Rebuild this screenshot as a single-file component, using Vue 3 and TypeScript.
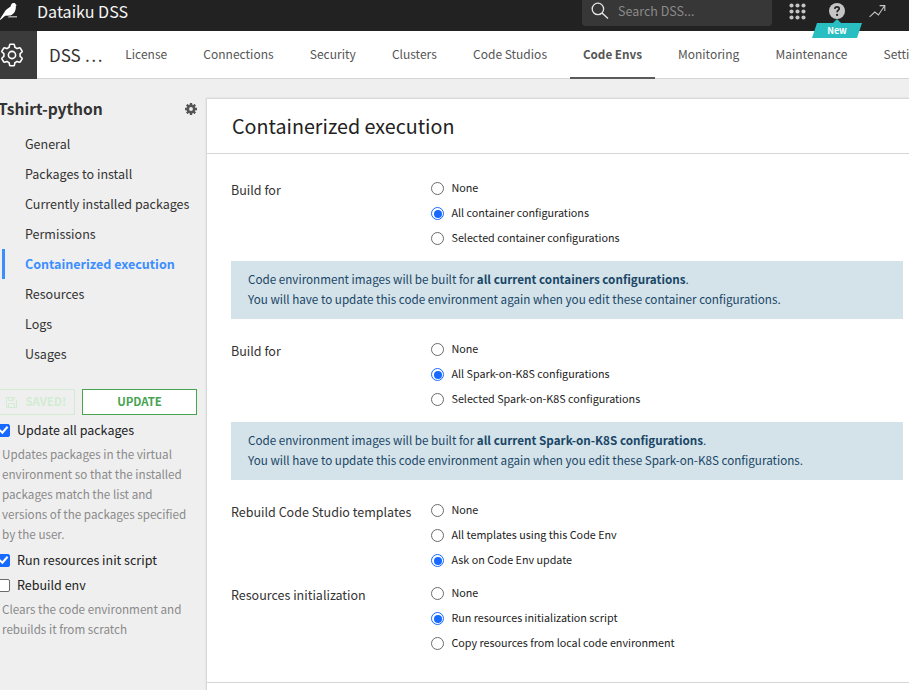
<script setup lang="ts">
import { reactive, ref } from 'vue'

interface Group {
  key: string
  label: string
  options: string[]
  selected: number
  note?: { strong: string; rest: string }
}

const tabs = ['License', 'Connections', 'Security', 'Clusters', 'Code Studios', 'Code Envs', 'Monitoring', 'Maintenance', 'Settings']
const activeTab = ref('Code Envs')

const sections = ['General', 'Packages to install', 'Currently installed packages', 'Permissions', 'Containerized execution', 'Resources', 'Logs', 'Usages']
const activeSection = ref('Containerized execution')

const groups = reactive<Group[]>([
  {
    key: 'containers',
    label: 'Build for',
    options: ['None', 'All container configurations', 'Selected container configurations'],
    selected: 1,
    note: { strong: 'all current containers configurations', rest: 'container' },
  },
  {
    key: 'spark',
    label: 'Build for',
    options: ['None', 'All Spark-on-K8S configurations', 'Selected Spark-on-K8S configurations'],
    selected: 1,
    note: { strong: 'all current Spark-on-K8S configurations', rest: 'Spark-on-K8S' },
  },
  {
    key: 'studio',
    label: 'Rebuild Code Studio templates',
    options: ['None', 'All templates using this Code Env', 'Ask on Code Env update'],
    selected: 2,
  },
  {
    key: 'resources',
    label: 'Resources initialization',
    options: ['None', 'Run resources initialization script', 'Copy resources from local code environment'],
    selected: 1,
  },
])

const flags = reactive({ updateAll: true, runInit: true, rebuild: false })
</script>

<template>
  <div class="page">
    <header class="topbar">
      <svg class="bird" width="18" height="21" viewBox="0 0 18 21">
        <path fill="#fff" d="M0 19 L4.2 12.4 C5.6 9.8 8.4 8.3 10.6 6.6 C10.8 4.6 11.8 3 13.6 3 C14.8 3 15.4 3.5 15.7 4.3 L16.8 5.2 L15.8 5.8 C16.2 9.7 14.8 13.8 10.4 15.4 L5.2 15.7 L.6 19.8 H0 Z" />
        <path fill="#aaa" d="M9 16 H17 V17.6 H7.5 Z" />
      </svg>
      <span class="product">Dataiku DSS</span>
      <div class="search">
        <svg width="18" height="18" viewBox="0 0 18 18" fill="none" stroke="#e8e8e8" stroke-width="1.3">
          <circle cx="6.9" cy="6.9" r="5.7" />
          <path d="M11 11 L17 16.6" />
        </svg>
        <span>Search DSS...</span>
      </div>
      <svg class="apps" width="17" height="17" viewBox="0 0 17 17" fill="#c4c4c4">
        <template v-for="r in 3" :key="r">
          <circle v-for="c in 3" :key="c" :cx="c * 6 - 3.5" :cy="r * 6 - 3.5" r="2.05" />
        </template>
      </svg>
      <div class="help">
        <svg width="16" height="16" viewBox="0 0 16 16">
          <circle cx="8" cy="8" r="8" fill="#c4c4c4" />
          <path d="M5.8 5.9 C5.9 4.4 6.8 3.8 8 3.8 C9.4 3.8 10.2 4.6 10.2 5.7 C10.2 7.2 8.1 7.3 8.1 9.3" fill="none" stroke="#222" stroke-width="1.7" />
          <circle cx="8.1" cy="11.9" r="1.15" fill="#222" />
        </svg>
        <div class="badge"><span>New</span></div>
      </div>
      <svg class="trend" width="18" height="15" viewBox="0 0 18 15" fill="none" stroke="#c4c4c4" stroke-width="1.1">
        <path d="M.6 12.9 L5.8 8 L9.4 11 L15.6 1.8 M10.6 1.6 H15.8 V7" />
      </svg>
    </header>

    <nav class="navbar">
      <div class="admin">
        <svg width="24" height="24" viewBox="0 0 24 24" fill="none" stroke="#fff" stroke-width="1.6" stroke-linejoin="round">
          <path d="M10.2 1.3 H13.8 Q14.3 1.3 14.4 1.9 L14.9 4.3 L17.1 5.6 L19.5 4.8 Q20 4.6 20.3 5.1 L22.1 8.1 Q22.4 8.6 22 9 L20.1 10.7 V13.3 L22 15 Q22.4 15.4 22.1 15.9 L20.3 18.9 Q20 19.4 19.5 19.2 L17.1 18.4 L14.9 19.7 L14.4 22.1 Q14.3 22.7 13.8 22.7 H10.2 Q9.7 22.7 9.6 22.1 L9.1 19.7 L6.9 18.4 L4.5 19.2 Q4 19.4 3.7 18.9 L1.9 15.9 Q1.6 15.4 2 15 L3.9 13.3 V10.7 L2 9 Q1.6 8.6 1.9 8.1 L3.7 5.1 Q4 4.6 4.5 4.8 L6.9 5.6 L9.1 4.3 L9.6 1.9 Q9.7 1.3 10.2 1.3 Z" />
          <circle cx="12" cy="12" r="3.6" />
        </svg>
      </div>
      <div class="crumb">DSS …</div>
      <div class="tabs">
        <a v-for="t in tabs" :key="t" class="tab" :class="{ active: t === activeTab }" @click="activeTab = t">{{ t }}</a>
      </div>
    </nav>

    <div class="body">
      <aside class="side">
        <div class="env">
          <h1>Tshirt-python</h1>
          <svg width="12" height="12" viewBox="0 0 12 12">
            <circle cx="6" cy="6" r="3.2" fill="none" stroke="#555" stroke-width="2.6" />
            <g fill="#555">
              <rect v-for="i in 8" :key="i" x="4.8" y="0" width="2.4" height="2.4" rx=".3" :transform="`rotate(${i * 45} 6 6)`" />
            </g>
          </svg>
        </div>
        <ul class="menu">
          <li v-for="s in sections" :key="s" :class="{ active: s === activeSection }" @click="activeSection = s">{{ s }}</li>
        </ul>
        <div class="buttons">
          <button class="saved" disabled>
            <svg width="11" height="11" viewBox="0 0 11 11" fill="none" stroke="currentColor">
              <path d="M.5 .5 H8.2 L10.5 2.8 V10.5 H.5 Z M2.5 .5 V3.5 H7.5 V.5 M2.5 10.5 V6.5 H8.5 V10.5" />
              <path d="M6 .5 V3" />
            </svg>
            <span>SAVED!</span>
          </button>
          <button class="update">UPDATE</button>
        </div>
        <label class="check"><input v-model="flags.updateAll" type="checkbox"><span>Update all packages</span></label>
        <p>Updates packages in the virtual<br>environment so that the installed<br>packages match the list and<br>versions of the packages specified<br>by the user.</p>
        <label class="check"><input v-model="flags.runInit" type="checkbox"><span>Run resources init script</span></label>
        <label class="check"><input v-model="flags.rebuild" type="checkbox"><span>Rebuild env</span></label>
        <p>Clears the code environment and<br>rebuilds it from scratch</p>
      </aside>

      <main class="panel">
        <h2>Containerized execution</h2>
        <div class="form">
          <section v-for="g in groups" :key="g.key" :class="{ noted: g.note }">
            <div class="row">
              <div class="name">{{ g.label }}</div>
              <div class="options">
                <label v-for="(o, i) in g.options" :key="o">
                  <input v-model="g.selected" type="radio" :name="g.key" :value="i"><span>{{ o }}</span>
                </label>
              </div>
            </div>
            <div v-if="g.note" class="note">
              Code environment images will be built for <strong>{{ g.note.strong }}</strong>.<br>
              You will have to update this code environment again when you edit these {{ g.note.rest }} configurations.
            </div>
          </section>
        </div>
      </main>
    </div>
  </div>
</template>

<style>
body { margin: 0; overflow: hidden; }
</style>

<style scoped>
* { box-sizing: border-box; }
.page {
  display: flex; flex-direction: column;
  width: 909px; height: 690px; overflow: hidden;
  background: #efefef; color: #333;
  font-family: "Noto Sans CJK SC", "Noto Sans", sans-serif;
  font-size: 12.53px;
}
.topbar { display: flex; height: 31px; flex: none; background: #222; position: relative; z-index: 1; }
.bird { flex: none; }
.product { width: 545px; margin-left: 19px; line-height: 22px; font-size: 16.1px; color: #f5f5f5; white-space: nowrap; }
.search { display: flex; width: 190px; height: 26px; flex: none; padding: 2px 0 0 9px; gap: 9px; background: #373737; border-radius: 0 0 4px 4px; color: #8a8a8a; line-height: 18px; font-size: 12.53px; }
.apps { flex: none; margin: 3px 0 0 16.5px; }
.help { position: relative; width: 16px; margin: 3px 0 0 23.5px; flex: none; }
.help svg { display: block; }
.badge { position: absolute; left: -17px; top: 20px; width: 50px; height: 15px; background: #29bfc2; clip-path: polygon(10% 0, 100% 0, 90% 100%, 0 100%); color: #fff; text-align: center; font-weight: 700; font-size: 9px; line-height: 15px; }
.help::after { content: ""; position: absolute; left: 4px; top: 16px; border: 4px solid transparent; border-top: 0; border-bottom-color: #29bfc2; }
.trend { flex: none; margin: 4px 0 0 24px; }

.navbar { display: flex; height: 48px; flex: none; background: #fff; border-bottom: 1px solid #d5d5d5; }
.admin { width: 37px; height: 48px; flex: none; background: #3b3b3b; padding-top: 12px; }
.admin svg { display: block; }
.crumb { width: 75.2px; padding-left: 12px; flex: none; font-size: 17px; line-height: 47px; white-space: nowrap; }
.tabs { display: flex; gap: 10px; height: 48px; }
.tab { padding: 0 13.1px; line-height: 45px; font-size: 12px; color: #555; white-space: nowrap; cursor: pointer; }
.tab.active { padding: 0 12.8px; font-weight: 700; font-size: 11.7px; border-bottom: 2px solid #5a5a5a; }

.body { display: flex; flex: 1; min-height: 0; }
.side { width: 206px; flex: none; padding-top: 18px; }
.env { display: flex; justify-content: space-between; align-items: center; height: 23px; padding-right: 9px; margin-left: -2px; }
.env h1 { margin: 0; font-size: 15.6px; line-height: 23px; color: #333; }
.menu { list-style: none; margin: 9px 0 0 2px; padding: 0; }
.menu li { height: 30px; line-height: 30px; padding-left: 23px; white-space: nowrap; cursor: pointer; }
.menu li.active { border-left: 3px solid #3b8eff; padding-left: 20px; color: #3b8eff; font-weight: 700; }
.buttons { display: flex; gap: 7px; margin: 20px 0 0 -10px; }
button { height: 26px; font: 700 11.4px/22px "Noto Sans CJK SC", sans-serif; border: 1px solid; padding: 0 0 2px; }
.saved { display: flex; align-items: center; width: 85px; gap: 8.5px; padding-left: 15px; background: none; border-color: #d1ecd3; color: #d1ecd3; }
.saved svg { margin-top: 2px; }
.update { width: 115px; background: #fff; border-color: #46a350; color: #46a350; }
.check { display: flex; align-items: center; gap: 7px; height: 25px; margin-left: -3px; white-space: nowrap; color: #222; }
.check span, .options span { padding-bottom: 2px; }
.buttons + .check { margin-top: 3px; }
.side p { margin: 1px 0 4px 2px; line-height: 20px; font-size: 11.67px; color: #8a8a8a; white-space: nowrap; }
input { appearance: none; display: block; position: relative; margin: 0; width: 13px; height: 13px; flex: none; background: #fff; border: 1px solid #6b6b6b; }
input[type="checkbox"] { border-radius: 2px; }
input[type="checkbox"]:checked { background: #1769ff; border-color: #1769ff; }
input[type="checkbox"]:checked::after { content: ""; position: absolute; inset: 0; background: #fff; clip-path: polygon(8% 52%, 22% 39%, 38% 57%, 80% 10%, 94% 22%, 40% 84%); }
input[type="radio"] { border-radius: 50%; }
input[type="radio"]:checked { border-color: #1769ff; }
input[type="radio"]:checked::after { content: ""; position: absolute; inset: 1.5px; border-radius: 50%; background: #1769ff; }

.panel { flex: 1; margin: 19px -8px 0 0; background: #fff; border: 1px solid #d9d9d9; border-bottom: 0; box-shadow: 0 0 2px rgba(0, 0, 0, .1); }
h2 { margin: 0; height: 55px; padding-left: 25px; border-bottom: 1px solid #d5d5d5; font-weight: 400; font-size: 19.7px; line-height: 54px; color: #222; }
.form { height: 529px; padding: 22px 0 0 24px; border-bottom: 1px solid #d5d5d5; }
section { margin-bottom: 8px; }
section.noted { margin-bottom: 18px; }
.row { display: flex; }
.name { width: 200px; line-height: 27px; white-space: nowrap; }
.options label { display: flex; align-items: center; gap: 7.5px; height: 25px; font-size: 10.75px; white-space: nowrap; color: #222; }
.note { width: 672px; height: 58px; margin-top: 10px; padding: 8px 17px; background: #d4e2e9; color: #194667; font-size: 11.66px; line-height: 20px; white-space: nowrap; }
</style>
